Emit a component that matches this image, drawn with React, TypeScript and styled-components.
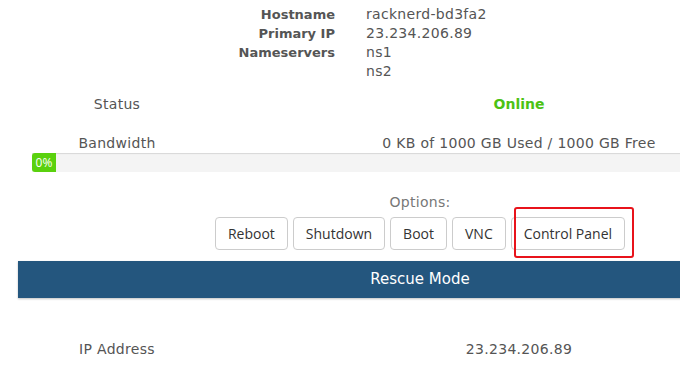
import React from "react";
import styled, { createGlobalStyle } from "styled-components";

const GlobalStyle = createGlobalStyle`
  html, body {
    margin: 0;
    padding: 0;
    overflow: hidden;
    background: #ffffff;
  }
  body {
    font-family: "DejaVu Sans", "Liberation Sans", sans-serif;
    color: #555555;
  }
`;

const Frame = styled.div`
  width: 100vw;
  height: 100vh;
  overflow: hidden;
`;

const Page = styled.div`
  margin-left: 18px;
  width: 804px;
  font-size: 14px;
  letter-spacing: 0.3px;
`;

const InfoGrid = styled.div`
  display: grid;
  grid-template-columns: 317px 1fr;
  column-gap: 31px;
  padding-top: 5px;
  line-height: 19px;
`;

const InfoLabel = styled.div`
  text-align: right;
  font-weight: bold;
  font-size: 13px;
  letter-spacing: 0;
  color: #555555;
`;

const InfoValue = styled.div`
  color: #555555;
`;

const TableRow = styled.div<{ $top: number }>`
  display: grid;
  grid-template-columns: 198px 606px;
  margin-top: ${(p) => p.$top}px;
  line-height: 19px;
  text-align: center;
`;

const Cell = styled.div<{ $status?: boolean }>`
  color: ${(p) => (p.$status ? "#4cc214" : "#555555")};
  font-weight: ${(p) => (p.$status ? "bold" : "normal")};
  letter-spacing: ${(p) => (p.$status ? "0" : "0.3px")};
`;

const ProgressTrack = styled.div`
  margin: 0 14px;
  height: 19px;
  background: #f4f4f4;
  box-shadow: inset 0 1px 1px rgba(0, 0, 0, 0.12);
  display: flex;
`;

const ProgressFill = styled.div`
  width: 24px;
  background: #5ad10e;
  border-radius: 3px 0 0 3px;
  color: #ffffff;
  font-family: "Open Sans", "Liberation Sans", sans-serif;
  font-size: 12px;
  letter-spacing: 0;
  line-height: 19px;
  text-align: center;
`;

const OptionsLabel = styled.div`
  margin-top: 21px;
  line-height: 19px;
  text-align: center;
  color: #777777;
`;

const ButtonRow = styled.div`
  display: flex;
  justify-content: center;
  gap: 5px;
  margin-top: 5px;
`;

const Button = styled.button`
  font-family: "Open Sans", "Liberation Sans", sans-serif;
  font-size: 14px;
  line-height: 19px;
  color: #333333;
  background: #ffffff;
  border: 1px solid #cccccc;
  border-radius: 4px;
  padding: 6px 12px;
  margin: 0;
`;

const Highlight = styled.div`
  position: relative;
  display: flex;
`;

const RedBox = styled.span`
  position: absolute;
  top: -10px;
  left: 3px;
  right: -9px;
  bottom: -8px;
  border: 2px solid #e8131b;
  border-radius: 3px;
  pointer-events: none;
`;

const RescueBar = styled.div`
  margin-top: 11px;
  height: 37px;
  background: #24567e;
  box-shadow: 0 1px 2px rgba(0, 0, 0, 0.25);
  color: #ffffff;
  font-size: 15px;
  letter-spacing: 0;
  line-height: 37px;
  text-align: center;
`;

export default function App() {
  return (
    <>
      <GlobalStyle />
      <Frame>
        <Page>
          <InfoGrid>
            <InfoLabel>Hostname</InfoLabel>
            <InfoValue>racknerd-bd3fa2</InfoValue>
            <InfoLabel>Primary IP</InfoLabel>
            <InfoValue>23.234.206.89</InfoValue>
            <InfoLabel>Nameservers</InfoLabel>
            <InfoValue>
              ns1
              <br />
              ns2
            </InfoValue>
          </InfoGrid>

          <TableRow $top={14}>
            <Cell>Status</Cell>
            <Cell $status>Online</Cell>
          </TableRow>

          <TableRow $top={20}>
            <Cell>Bandwidth</Cell>
            <Cell>0 KB of 1000 GB Used / 1000 GB Free</Cell>
          </TableRow>
          <ProgressTrack>
            <ProgressFill>0%</ProgressFill>
          </ProgressTrack>

          <OptionsLabel>Options:</OptionsLabel>
          <ButtonRow>
            <Button>Reboot</Button>
            <Button>Shutdown</Button>
            <Button>Boot</Button>
            <Button>VNC</Button>
            <Highlight>
              <Button>Control Panel</Button>
              <RedBox />
            </Highlight>
          </ButtonRow>

          <RescueBar>Rescue Mode</RescueBar>

          <TableRow $top={42}>
            <Cell>IP Address</Cell>
            <Cell>23.234.206.89</Cell>
          </TableRow>
        </Page>
      </Frame>
    </>
  );
}
